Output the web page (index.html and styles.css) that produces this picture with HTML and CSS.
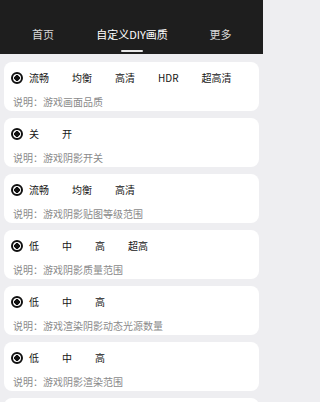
FILE: index.html
```html
<!DOCTYPE html>
<html lang="zh">
<head>
<meta charset="utf-8">
<link rel="stylesheet" href="styles.css">
</head>
<body>
<div class="page">
<header class="tabs">
  <div class="tab">首页</div>
  <div class="tab active">自定义DIY画质</div>
  <div class="tab">更多</div>
</header>
<main class="list">
  <section class="card">
    <div class="options">
      <span class="radio"></span>
      <span class="opt">流畅</span><span class="opt">均衡</span><span class="opt">高清</span><span class="opt">HDR</span><span class="opt">超高清</span>
    </div>
    <p class="desc">说明：游戏画面品质</p>
  </section>
  <section class="card">
    <div class="options">
      <span class="radio"></span>
      <span class="opt">关</span><span class="opt">开</span>
    </div>
    <p class="desc">说明：游戏阴影开关</p>
  </section>
  <section class="card">
    <div class="options">
      <span class="radio"></span>
      <span class="opt">流畅</span><span class="opt">均衡</span><span class="opt">高清</span>
    </div>
    <p class="desc">说明：游戏阴影贴图等级范围</p>
  </section>
  <section class="card">
    <div class="options">
      <span class="radio"></span>
      <span class="opt">低</span><span class="opt">中</span><span class="opt">高</span><span class="opt">超高</span>
    </div>
    <p class="desc">说明：游戏阴影质量范围</p>
  </section>
  <section class="card">
    <div class="options">
      <span class="radio"></span>
      <span class="opt">低</span><span class="opt">中</span><span class="opt">高</span>
    </div>
    <p class="desc">说明：游戏渲染阴影动态光源数量</p>
  </section>
  <section class="card">
    <div class="options">
      <span class="radio"></span>
      <span class="opt">低</span><span class="opt">中</span><span class="opt">高</span>
    </div>
    <p class="desc">说明：游戏阴影渲染范围</p>
  </section>
  <section class="card"></section>
</main>
</div>
</body>
</html>
```

FILE: styles.css
```css
* { box-sizing: border-box; }
html, body {
  margin: 0;
  padding: 0;
  background: #eeeef1;
  font-family: "Noto Sans CJK SC", "Noto Sans", sans-serif;
}
.page {
  width: 263px;
  height: 402px;
  overflow: hidden;
  background: #eeeef1;
}
.tabs {
  height: 54px;
  background: #1e1e1e;
  display: grid;
  grid-template-columns: 86px 92px 85px;
  align-items: start;
  padding-top: 26px;
}
.tab {
  position: relative;
  text-align: center;
  color: #d8d8d8;
  font-size: 11px;
  line-height: 16px;
}
.tab.active {
  color: #ffffff;
}
.tab.active::after {
  content: "";
  position: absolute;
  left: 50%;
  top: 24px;
  width: 22px;
  height: 2px;
  margin-left: -11px;
  background: #e8e8e8;
  border-radius: 1px;
}
.list {
  display: flex;
  flex-direction: column;
  gap: 7px;
  padding: 8px 4px 0 4px;
}
.card {
  background: #ffffff;
  border-radius: 8px;
  height: 49px;
  flex: none;
  padding: 9px 0 0 7px;
}
.options {
  display: flex;
  align-items: center;
  height: 14px;
  gap: 23px;
}
.radio {
  width: 12px;
  height: 12px;
  border-radius: 50%;
  border: 2px solid #111;
  background: radial-gradient(circle, #111 0 2.6px, #fff 3px);
  margin-right: -17px;
  flex: none;
}
.opt {
  font-size: 10px;
  color: #151515;
  line-height: 14px;
}
.desc {
  margin: 10px 0 0 2px;
  font-size: 10px;
  line-height: 14px;
  color: #8a8a8a;
}
```
